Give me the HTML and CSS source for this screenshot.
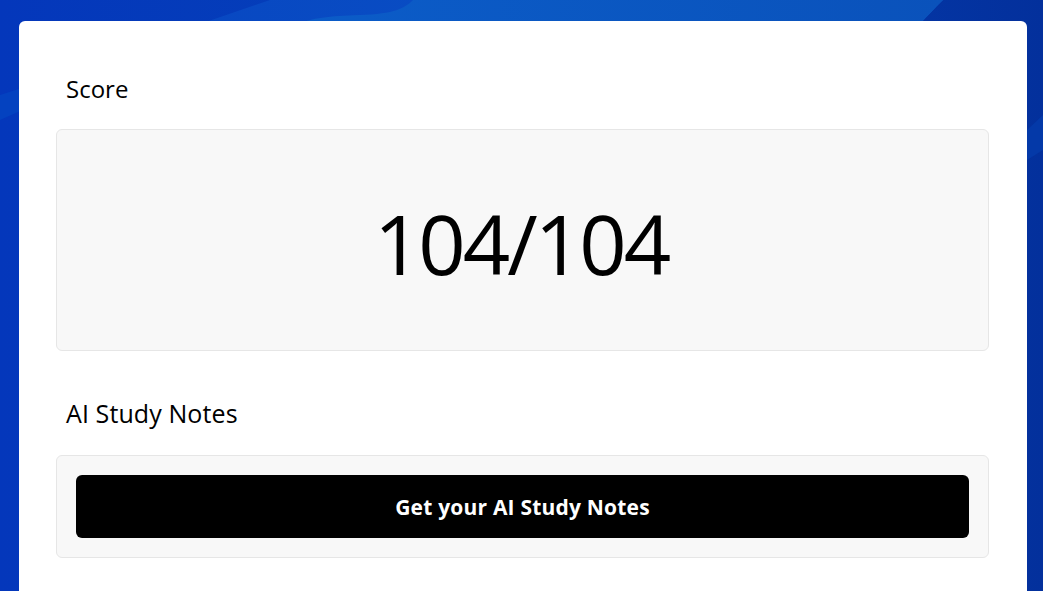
FILE: index.html
```html
<!DOCTYPE html>
<html lang="en">
<head>
<meta charset="utf-8">
<title>Score</title>
<link rel="stylesheet" href="styles.css">
</head>
<body>
<svg class="backdrop" viewBox="0 0 1043 591" preserveAspectRatio="none" aria-hidden="true">
  <defs>
    <linearGradient id="bg" x1="0" y1="0" x2="1" y2="0">
      <stop offset="0" stop-color="#0437bb"/>
      <stop offset="0.5" stop-color="#0542b8"/>
      <stop offset="1" stop-color="#03309c"/>
    </linearGradient>
    <linearGradient id="mid" x1="0" y1="0" x2="1" y2="0">
      <stop offset="0" stop-color="#0848c2"/>
      <stop offset="1" stop-color="#0a55c6"/>
    </linearGradient>
    <linearGradient id="light" x1="0" y1="0" x2="1" y2="0">
      <stop offset="0" stop-color="#0b5cc8"/>
      <stop offset="1" stop-color="#0a52bb"/>
    </linearGradient>
  </defs>
  <rect width="1043" height="591" fill="url(#bg)"/>
  <path d="M270 0 C 250 10 235 16 220 24 L 0 95 L 0 591 L 0 120 Z" fill="#0442c0"/>
  <path d="M270 0 L 943 0 C 935 8 928 15 920 24 L 200 24 Z" fill="url(#mid)"/>
  <path d="M413 0 L 943 0 C 935 8 928 15 920 24 L 300 24 C 310 18 330 16 360 15 C 395 14 405 8 413 0 Z" fill="url(#light)"/>
  <path d="M1043 115 L 1043 150 L 1027 160 L 1027 130 Z" fill="#0439a8"/>
</svg>
<main class="page">
  <section class="card">
    <h2 class="label">Score</h2>
    <div class="panel score-panel">
      <div class="score">104/104</div>
    </div>
    <h2 class="label notes-label">AI Study Notes</h2>
    <div class="panel notes-panel">
      <button class="notes-btn" type="button">Get your AI Study Notes</button>
    </div>
  </section>
</main>
</body>
</html>
```

FILE: styles.css
```css
html, body {
  margin: 0;
  height: 100%;
  overflow: hidden;
}
body {
  font-family: "Open Sans", "Noto Sans", "Liberation Sans", sans-serif;
  color: #000;
  background: #0437bb;
  position: relative;
}
.backdrop {
  position: absolute;
  left: 0;
  top: 0;
  width: 100%;
  height: 100%;
  z-index: 0;
}
.page {
  position: relative;
  z-index: 1;
  padding: 21px 16px 0 19px;
}
.card {
  background: #fff;
  border-radius: 6px;
  padding: 37px 38px 60px 37px;
  min-height: 600px;
}
.label {
  margin: 0;
  padding-left: 10px;
  font-weight: 400;
  font-size: 24px;
  line-height: 32px;
  height: 32px;
  margin-top: 15px;
  margin-bottom: 24px;
}
.notes-label {
  font-size: 25px;
  letter-spacing: 0.1px;
  margin-top: 46px;
  margin-bottom: 26px;
}
.panel {
  background: #f8f8f8;
  border: 1px solid #e6e6e6;
  border-radius: 6px;
}
.score-panel {
  height: 220px;
  display: flex;
  align-items: center;
  justify-content: center;
}
.score {
  font-size: 83px;
  line-height: 1;
  letter-spacing: -3px;
  padding-top: 4px;
  padding-right: 3px;
}
.notes-panel {
  padding: 19px;
}
.notes-btn {
  display: block;
  width: 100%;
  height: 63px;
  border: 0;
  border-radius: 6px;
  background: #000;
  color: #fff;
  font-family: "Open Sans", "Noto Sans", sans-serif;
  font-weight: 700;
  font-size: 21px;
  letter-spacing: 0.2px;
  cursor: pointer;
}
```
